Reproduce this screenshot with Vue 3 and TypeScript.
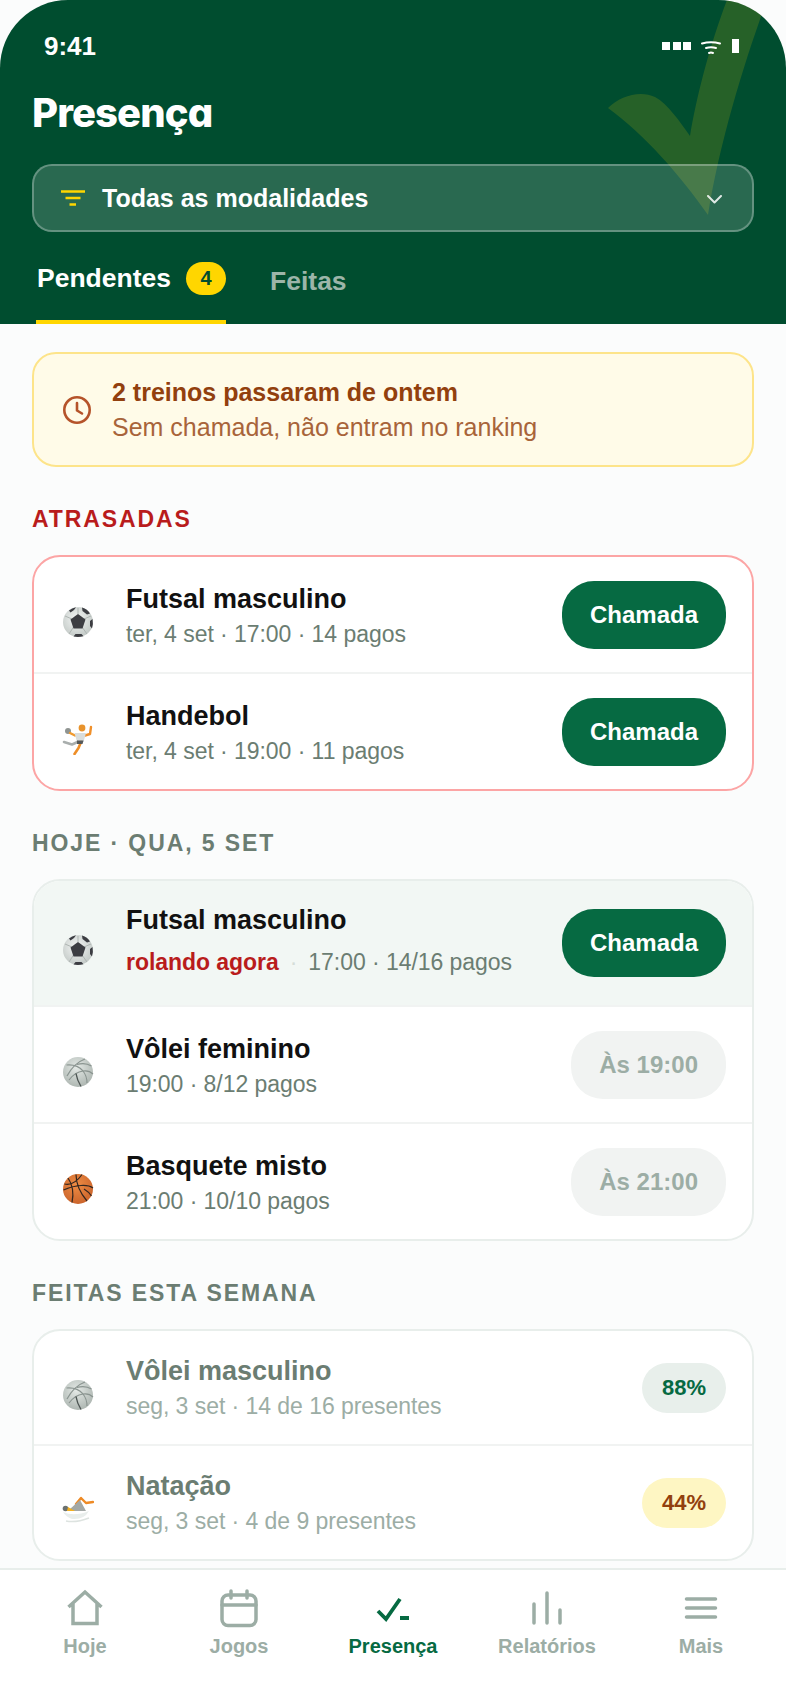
<template>
  <div class="screen">
    <header class="top">
      <svg class="big-check" viewBox="600 0 186 232" aria-hidden="true">
        <path d="M608 108C620 96 640 90 655 97C668 104 680 122 690 136C696 100 708 50 727 0L767 0C745 60 720 140 708 215C680 175 645 135 608 108Z" fill="#ffd600" fill-opacity=".15" />
      </svg>

      <div class="status">
        <span class="clock-text">9:41</span>
        <div class="status-icons">
          <span class="sq"></span><span class="sq"></span><span class="sq"></span>
          <svg class="wifi" width="20" height="14" viewBox="0 0 20 14" fill="none" stroke="#fff" stroke-width="2" stroke-linecap="round">
            <path d="M1 2.500Q10 0 19 2.500" />
            <path d="M5 7Q10 5.500 15 7" />
            <path d="M8 12Q10 11.200 12 12" />
          </svg>
          <span class="batt"></span>
        </div>
      </div>

      <h1 class="title">Presença</h1>

      <div class="filter">
        <svg width="24" height="16" viewBox="0 0 24 16" fill="none" stroke="#ffd600" stroke-width="2.400">
          <path d="M0 1.500H24M4.500 8H19.500M8.500 14.500H15" />
        </svg>
        <span class="filter-label">Todas as modalidades</span>
        <svg class="chev" width="15" height="9" viewBox="0 0 15 9" fill="none" stroke="#fff" stroke-opacity=".85" stroke-width="2" stroke-linecap="round" stroke-linejoin="round">
          <path d="M1 1L7.500 7.500L14 1" />
        </svg>
      </div>

      <div class="tabs">
        <div class="tab active">Pendentes <span class="count">4</span></div>
        <div class="tab">Feitas</div>
      </div>
    </header>

    <main class="content">
      <div class="notice">
        <svg width="30" height="30" viewBox="0 0 30 30" fill="none" stroke="#b5532a" stroke-width="2.600" stroke-linecap="round" stroke-linejoin="round">
          <circle cx="15" cy="15" r="12.700" />
          <path d="M15 8V15.500L20 18.500" />
        </svg>
        <div>
          <div class="notice-title">2 treinos passaram de ontem</div>
          <div class="notice-sub">Sem chamada, não entram no ranking</div>
        </div>
      </div>

      <section v-for="sec in sections" :key="sec.label" class="section">
        <h2 class="sec-label" :class="{ late: sec.late }">{{ sec.label }}</h2>
        <div class="card" :class="{ late: sec.late }">
          <div
            v-for="row in sec.rows"
            :key="row.name"
            class="row"
            :class="{ live: row.live, done: row.pct }"
          >
            <svg class="sport" width="32" height="32" viewBox="0 0 32 32">
              <defs>
                <radialGradient id="soccer-shade" cx=".45" cy=".4" r=".65">
                  <stop offset="0" stop-color="#f4f6f5" />
                  <stop offset="1" stop-color="#bfc6c3" />
                </radialGradient>
                <radialGradient id="volley-shade" cx=".45" cy=".35" r=".7">
                  <stop offset="0" stop-color="#e4e9e6" />
                  <stop offset="1" stop-color="#aab3ae" />
                </radialGradient>
                <radialGradient id="basket-shade" cx=".45" cy=".35" r=".7">
                  <stop offset="0" stop-color="#ee8c44" />
                  <stop offset="1" stop-color="#c9622a" />
                </radialGradient>
              </defs>
              <g v-if="row.sport === 'soccer'">
                <circle cx="16" cy="16" r="15" fill="url(#soccer-shade)" />
                <path d="M16 8V2M22 13L29 10M20 21L25 28M11.500 21L7 28M10 13L3 10" stroke="#aeb5b2" stroke-width="1" fill="none" />
                <path d="M16 8L23.500 13.500L20.500 22.500H11.500L8.500 13.500Z" fill="#3c3d42" />
                <path d="M7 4.500Q10 2 14 1.300L12 4L8.500 6.500ZM20 1.500Q25.500 3 28 7.500L25 8.500L20.500 5ZM30.500 13Q31.500 18 30 22.500L28 20V15ZM11.500 30.500Q16 31.500 21.500 30.300L19.500 28H13.500Z" fill="#3c3d42" />
              </g>
              <g v-else-if="row.sport === 'volley'">
                <circle cx="16" cy="16" r="15" fill="url(#volley-shade)" />
                <path d="M23 3Q12 7 5 20M4.500 9Q15 8 21 15M15 8.500Q23 6 29.500 10M21 15Q27 14 31 18M7 24Q13 16 21 15M21 15Q25 20 25 27" stroke="#8a9490" stroke-width="1.200" fill="none" />
                <path d="M14 17.500Q15 24 19 30.500" stroke="#4d5553" stroke-width="1.400" fill="none" />
              </g>
              <g v-else-if="row.sport === 'basket'">
                <circle cx="16" cy="16" r="15" fill="url(#basket-shade)" />
                <path d="M2.500 11Q12 13 20 1.500M6 5Q13 15 10 29.500M1.500 17Q10 13 19 12.500Q27 12 31 15M14 1.500Q14 15 25 28M22 16Q27 19 29.500 23" stroke="#33261f" stroke-width="1.200" fill="none" />
              </g>
              <g v-else-if="row.sport === 'handball'">
                <circle cx="6" cy="8" r="3" fill="#8f9491" />
                <path d="M8 10L13 12.500" stroke="#f09a2e" stroke-width="2.400" stroke-linecap="round" />
                <path d="M23 12.500L28 11L29 4" stroke="#f0902a" stroke-width="2.400" stroke-linecap="round" stroke-linejoin="round" fill="none" />
                <path d="M12.500 10L24 10L21.500 19H15Z" fill="#d9dddc" />
                <circle cx="20" cy="5" r="3.400" fill="#e8932c" />
                <path d="M15.500 19L10 21.500L2 19" stroke="#a9aead" stroke-width="2.600" stroke-linecap="round" stroke-linejoin="round" fill="none" />
                <path d="M19 19L16.500 25L12.500 31" stroke="#ee8e27" stroke-width="2.600" stroke-linecap="round" stroke-linejoin="round" fill="none" />
                <path d="M15 17.500H21.500L20.500 21H15Z" fill="#55595a" />
              </g>
              <g v-else>
                <path d="M14 10L19 4L24 9L31 8" stroke="#ee8a25" stroke-width="2.400" fill="none" stroke-linejoin="round" stroke-linecap="round" />
                <path d="M8 15L18 6L24 17H9Z" fill="#a3a8a6" />
                <circle cx="3.500" cy="14.500" r="2.800" fill="#6c7270" />
                <path d="M6 13L13 17H5Z" fill="#f3b01f" />
                <path d="M1 18Q12 23 27 17Q22 26 10 25Q4 23 1 18Z" fill="#e9eeec" />
                <path d="M4 27Q14 29 27 24" stroke="#dde3e0" stroke-width="1.500" fill="none" />
              </g>
            </svg>

            <div class="info">
              <div class="name">{{ row.name }}</div>
              <div class="sub">
                <template v-if="row.live">
                  <span class="now">rolando agora</span><span class="sep">·</span>
                </template>{{ row.sub }}
              </div>
            </div>

            <div v-if="row.pct" class="pct" :class="{ low: row.low }">{{ row.pct }}</div>
            <div v-else-if="row.wait" class="btn wait">{{ row.wait }}</div>
            <div v-else class="btn">Chamada</div>
          </div>
        </div>
      </section>
    </main>

    <nav class="nav">
      <div v-for="item in navItems" :key="item" class="nav-item" :class="{ on: item === 'Presença' }">
        <svg width="40" height="40" viewBox="0 0 40 40" fill="none" stroke="currentColor" stroke-width="3.500" stroke-linecap="round" stroke-linejoin="round">
          <path v-if="item === 'Hoje'" d="M3.500 19L20 4L36.500 19M8 15.500V35.500H32V15.500" stroke-linecap="butt" stroke-linejoin="miter" />
          <g v-else-if="item === 'Jogos'">
            <rect x="3" y="7" width="34" height="30.500" rx="6" />
            <path d="M3 17H37M12 3V10M28 3V10" />
          </g>
          <path v-else-if="item === 'Presença'" d="M5 23L13 31L27 11M27 30H36" stroke-width="3.800" stroke-linecap="butt" stroke-linejoin="miter" />
          <path v-else-if="item === 'Relatórios'" d="M7 16V35M20 5V35M33 22V35" />
          <path v-else d="M5.500 11H34.500M5.500 20H34.500M5.500 29H34.500" />
        </svg>
        <span>{{ item }}</span>
      </div>
    </nav>
  </div>
</template>

<script setup lang="ts">
interface Row {
  sport: 'soccer' | 'handball' | 'volley' | 'basket' | 'swim'
  name: string
  sub: string
  live?: boolean
  wait?: string
  pct?: string
  low?: boolean
}

interface Section {
  label: string
  late?: boolean
  rows: Row[]
}

const sections: Section[] = [
  {
    label: 'ATRASADAS',
    late: true,
    rows: [
      { sport: 'soccer', name: 'Futsal masculino', sub: 'ter, 4 set · 17:00 · 14 pagos' },
      { sport: 'handball', name: 'Handebol', sub: 'ter, 4 set · 19:00 · 11 pagos' },
    ],
  },
  {
    label: 'HOJE · QUA, 5 SET',
    rows: [
      { sport: 'soccer', name: 'Futsal masculino', sub: '17:00 · 14/16 pagos', live: true },
      { sport: 'volley', name: 'Vôlei feminino', sub: '19:00 · 8/12 pagos', wait: 'Às 19:00' },
      { sport: 'basket', name: 'Basquete misto', sub: '21:00 · 10/10 pagos', wait: 'Às 21:00' },
    ],
  },
  {
    label: 'FEITAS ESTA SEMANA',
    rows: [
      { sport: 'volley', name: 'Vôlei masculino', sub: 'seg, 3 set · 14 de 16 presentes', pct: '88%' },
      { sport: 'swim', name: 'Natação', sub: 'seg, 3 set · 4 de 9 presentes', pct: '44%', low: true },
    ],
  },
]

const navItems = ['Hoje', 'Jogos', 'Presença', 'Relatórios', 'Mais']
</script>

<style>
html,
body {
  margin: 0;
  background: #fbfcfc;
}
</style>

<style scoped>
.screen {
  width: 786px;
  height: 1704px;
  display: flex;
  flex-direction: column;
  overflow: hidden;
  background: #fbfcfc;
  font-family: "Liberation Sans", Arial, sans-serif;
}

.top {
  position: relative;
  height: 324px;
  flex: none;
  box-sizing: border-box;
  padding: 0 32px;
  overflow: hidden;
  background: #004d2f;
  border-radius: 68px 68px 0 0;
  color: #fff;
}

.big-check {
  position: absolute;
  left: 600px;
  top: 0;
  width: 186px;
  height: 232px;
}

.status {
  position: relative;
  display: flex;
  justify-content: space-between;
  align-items: center;
  height: 28px;
  padding: 32px 15px 0 12px;
}

.clock-text {
  font-size: 26px;
  font-weight: 700;
}

.status-icons {
  display: flex;
  align-items: center;
  gap: 2.5px;
}

.sq {
  width: 8px;
  height: 8px;
  background: #fff;
}

.wifi {
  margin: 4px 0 0 7px;
}

.batt {
  width: 7px;
  height: 14px;
  margin-left: 9px;
  background: #fff;
}

.title {
  position: relative;
  margin: 29px 0 0;
  height: 48px;
  font-family: Inter, "Liberation Sans", sans-serif;
  font-feature-settings: "cv11" 1;
  font-size: 40px;
  line-height: 48px;
  font-weight: 800;
  letter-spacing: -0.9px;
}

.filter {
  position: relative;
  display: flex;
  align-items: center;
  height: 68px;
  margin-top: 27px;
  box-sizing: border-box;
  padding: 0 30px 0 27px;
  background: rgba(255, 255, 255, 0.16);
  border: 2px solid rgba(255, 255, 255, 0.28);
  border-radius: 20px;
}

.filter-label {
  margin-left: 17px;
  font-size: 25px;
  font-weight: 700;
}

.chev {
  margin-left: auto;
  margin-top: 3px;
}

.tabs {
  position: relative;
  display: flex;
  gap: 42px;
  margin: 20px 0 0 4px;
  height: 72px;
}

.tab {
  display: flex;
  align-items: center;
  height: 72px;
  box-sizing: border-box;
  padding: 0 0 14px 2px;
  font-size: 26.5px;
  font-weight: 700;
  color: #9cb5a9;
}

.tab.active {
  color: #fff;
  border-bottom: 4px solid #ffd600;
  padding: 0 0 16px 1px;
}

.count {
  display: flex;
  align-items: center;
  justify-content: center;
  width: 40px;
  height: 33px;
  margin-left: 15px;
  border-radius: 17px;
  background: #ffd600;
  color: #004d2f;
  font-size: 20px;
}

.content {
  flex: 1;
  min-height: 0;
  overflow: hidden;
  padding: 28px 32px 0;
}

.notice {
  display: flex;
  align-items: center;
  gap: 20px;
  height: 115px;
  box-sizing: border-box;
  padding: 0 28px;
  background: #fffbe8;
  border: 2px solid #fde48a;
  border-radius: 24px;
}

.notice-title {
  font-size: 25px;
  line-height: 32px;
  font-weight: 700;
  color: #92400e;
}

.notice-sub {
  margin-top: 3px;
  font-size: 25px;
  line-height: 32px;
  color: #a8643a;
}

.section {
  margin-top: 38px;
}

.sec-label {
  margin: 0 0 22px;
  font-size: 23px;
  line-height: 28px;
  font-weight: 700;
  letter-spacing: 1.9px;
  color: #6b7d72;
}

.sec-label.late {
  color: #b91c1c;
}

.card {
  overflow: hidden;
  background: #fff;
  border: 2px solid #e8eeeb;
  border-radius: 28px;
}

.card.late {
  border-color: #fca5a5;
}

.row {
  display: flex;
  align-items: center;
  padding: 23.5px 26px 23.5px 28px;
}

.row + .row {
  border-top: 2px solid #f1f3f2;
}

.row.live {
  height: 124px;
  box-sizing: border-box;
  padding-top: 0;
  padding-bottom: 0;
  background: #f2f7f4;
}

.row.done {
  padding-top: 24px;
  padding-bottom: 24px;
}

.sport {
  flex: none;
  margin: 14px 32px 0 0;
}

.info {
  flex: 1;
  min-width: 0;
  padding-top: 1px;
}

.live .info {
  padding: 0 0 6px;
}

.done .info {
  padding-top: 0;
}

.name {
  font-size: 27px;
  line-height: 32px;
  font-weight: 700;
  color: #111;
}

.sub {
  margin-top: 5px;
  font-size: 23px;
  line-height: 28px;
  letter-spacing: -0.05px;
  color: #6b7d72;
}

.live .sub {
  margin-top: 12px;
}

.now {
  font-weight: 700;
  color: #b91c1c;
}

.sep {
  margin: 0 11px;
  color: #d5ddd8;
}

.done .name {
  color: #6b7d72;
}

.done .sub {
  color: #9cada5;
}

.btn {
  flex: none;
  display: flex;
  align-items: center;
  justify-content: center;
  height: 68px;
  padding: 0 28px;
  border-radius: 32px;
  background: #066a42;
  color: #fff;
  font-size: 24px;
  font-weight: 700;
}

.btn.wait {
  background: #f1f3f2;
  color: #9cada5;
}

.pct {
  flex: none;
  display: flex;
  align-items: center;
  justify-content: center;
  height: 50px;
  padding: 0 20px;
  border-radius: 25px;
  background: #e8efeb;
  color: #066a42;
  font-size: 22px;
  font-weight: 700;
}

.pct.low {
  background: #fef6c3;
  color: #92400e;
}

.nav {
  flex: none;
  display: grid;
  grid-template-columns: repeat(5, 1fr);
  height: 136px;
  box-sizing: border-box;
  padding: 18px 8px 0;
  background: #fff;
  border-top: 2px solid #e8eeeb;
}

.nav-item {
  display: flex;
  flex-direction: column;
  align-items: center;
  gap: 6px;
  color: #9cada5;
  font-size: 20px;
  line-height: 24px;
  font-weight: 700;
}

.nav-item.on {
  color: #066a42;
}
</style>
